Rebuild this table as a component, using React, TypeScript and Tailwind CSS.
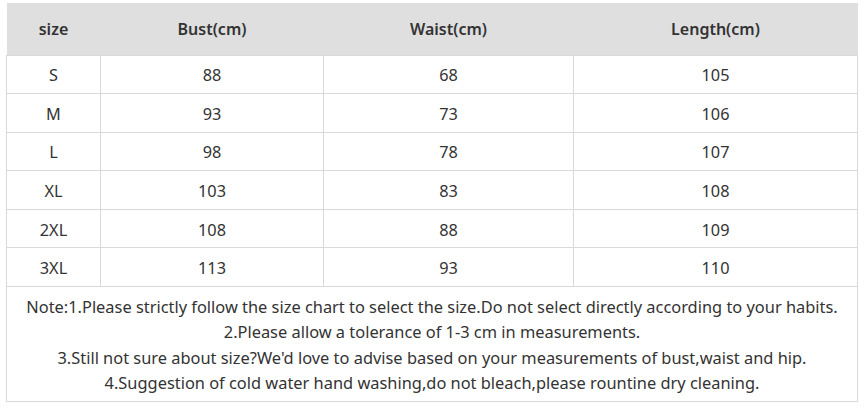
const ROWS = [
  ["S", "88", "68", "105"],
  ["M", "93", "73", "106"],
  ["L", "98", "78", "107"],
  ["XL", "103", "83", "108"],
  ["2XL", "108", "88", "109"],
  ["3XL", "113", "93", "110"],
];

const NOTES = [
  "Note:1.Please strictly follow the size chart to select the size.Do not select directly according to your habits.",
  "2.Please allow a tolerance of 1-3 cm in measurements.",
  "3.Still not sure about size?We'd love to advise based on your measurements of bust,waist and hip.",
  "4.Suggestion of cold water hand washing,do not bleach,please rountine dry cleaning.",
];

export default function App() {
  return (
    <div className="w-[867px] h-[413px] bg-white pt-[3px] pl-[6px] text-[#333] font-['Noto_Sans','Open_Sans',sans-serif]">
      <table className="w-[851px] border-collapse table-fixed text-center text-[16px]">
        <colgroup>
          <col className="w-[94px]" />
          <col className="w-[223px]" />
          <col className="w-[250px]" />
          <col className="w-[284px]" />
        </colgroup>
        <thead>
          <tr className="h-[52px] bg-[#dfdfdf]">
            <th className="font-semibold">size</th>
            <th className="font-semibold">Bust(cm)</th>
            <th className="font-semibold">Waist(cm)</th>
            <th className="font-semibold">Length(cm)</th>
          </tr>
        </thead>
        <tbody>
          {ROWS.map((row) => (
            <tr key={row[0]} className="h-[38.6px]">
              {row.map((cell, i) => (
                <td key={i} className="border border-[#d9d9d9] p-0 pt-[2px] leading-none text-[16.3px]">
                  {cell}
                </td>
              ))}
            </tr>
          ))}
          <tr>
            <td colSpan={4} className="border border-[#d9d9d9] pt-[7px] pb-[6px] text-[16.4px] leading-[25.3px]">
              {NOTES.map((n) => (
                <p key={n}>{n}</p>
              ))}
            </td>
          </tr>
        </tbody>
      </table>
    </div>
  );
}
